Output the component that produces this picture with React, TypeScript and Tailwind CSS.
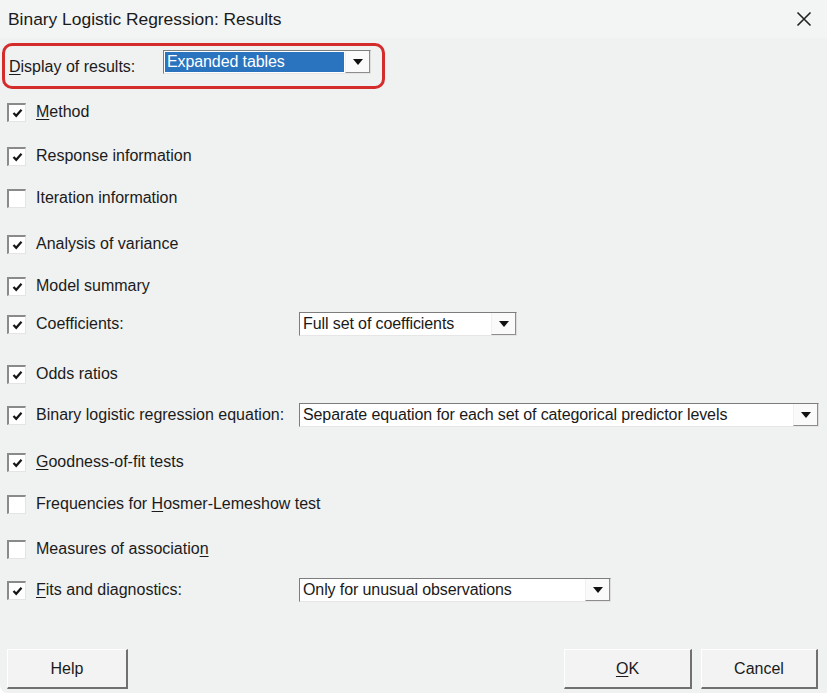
import React from 'react';

interface OptionRow {
  label: React.ReactNode;
  checked: boolean;
  mt: string;
  select?: { value: string; width: string };
}

function U({ children }: { children: React.ReactNode }) {
  return <span className="underline underline-offset-2">{children}</span>;
}

// Row list; margins keep the uneven spacing of the original dialog
const ROWS: OptionRow[] = [
  { label: <><U>M</U>ethod</>, checked: true, mt: 'mt-[11px]' },
  { label: 'Response information', checked: true, mt: 'mt-[20px]' },
  { label: 'Iteration information', checked: false, mt: 'mt-[18px]' },
  { label: 'Analysis of variance', checked: true, mt: 'mt-[22px]' },
  { label: 'Model summary', checked: true, mt: 'mt-[18px]' },
  { label: 'Coefficients:', checked: true, mt: 'mt-[14px]', select: { value: 'Full set of coefficients', width: 'w-[218px]' } },
  { label: 'Odds ratios', checked: true, mt: 'mt-[26px]' },
  { label: 'Binary logistic regression equation:', checked: true, mt: 'mt-[17px]', select: { value: 'Separate equation for each set of categorical predictor levels', width: 'w-[520px]' } },
  { label: <><U>G</U>oodness-of-fit tests</>, checked: true, mt: 'mt-[23px]' },
  { label: <>Frequencies for <U>H</U>osmer-Lemeshow test</>, checked: false, mt: 'mt-[18px]' },
  { label: <>Measures of associatio<U>n</U></>, checked: false, mt: 'mt-[21px]' },
  { label: <><U>F</U>its and diagnostics:</>, checked: true, mt: 'mt-[17px]', select: { value: 'Only for unusual observations', width: 'w-[312px]' } },
];

function Arrow() {
  return (
    <svg width="10" height="6" viewBox="0 0 10 6">
      <path d="M0 0 H10 L5 6 Z" fill="#111" />
    </svg>
  );
}

function Select({ value, width, highlight = false }: { value: string; width: string; highlight?: boolean }) {
  return (
    <div className={`${width} h-[24px] flex bg-white border-t border-l border-[#7d7d7d] border-r border-b border-r-[#dcdcdc] border-b-[#e6e6e6]`}>
      <div className="flex-1 flex items-center px-[1px] min-w-0">
        <span className={`px-[2px] leading-[20px] truncate tracking-[-0.1px] ${highlight ? 'bg-[#2a73bf] text-white w-full' : 'text-[#1a1a1a]'}`}>
          {value}
        </span>
      </div>
      <div className="w-[25px] flex items-center justify-center bg-[#fafafa] border-l border-[#f0f0f0] border-r border-b border-r-[#8d8d8d] border-b-[#8d8d8d]">
        <Arrow />
      </div>
    </div>
  );
}

function Checkbox({ checked }: { checked: boolean }) {
  return (
    <div className="w-[19px] h-[19px] bg-white border-t-2 border-l-2 border-[#8a8a8a] border-r border-b border-r-[#e4e4e4] border-b-[#e4e4e4] flex items-center justify-center">
      {checked && (
        <svg width="11" height="10" viewBox="0 0 11 10">
          <path d="M1.5 5 L4.2 7.8 L9.5 1.8" fill="none" stroke="#151515" strokeWidth="2.2" />
        </svg>
      )}
    </div>
  );
}

function Button({ children, width }: { children: React.ReactNode; width: string }) {
  return (
    <button className={`${width} h-[40px] bg-[#f3f3f3] border-t border-l border-[#ffffff] border-r-2 border-b-2 border-r-[#707070] border-b-[#707070] text-[16px] text-[#1a1a1a]`}>
      {children}
    </button>
  );
}

export default function App() {
  return (
    <div
      className="w-[827px] h-[693px] bg-[#f0f1f1] flex flex-col text-[16px] text-[#1b1b1b] rounded-bl-[8px] overflow-hidden"
      style={{ fontFamily: '"Liberation Sans", Arial, sans-serif' }}
    >
      {/* Title bar */}
      <div className="h-[38px] flex items-center justify-between pl-[8px] pr-[15px] bg-[#f3f4f4]">
        <span className="text-[17.4px] text-[#1a1a1a]">Binary Logistic Regression: Results</span>
        <svg width="16" height="16" viewBox="0 0 16 16">
          <path d="M1.5 1.5 L14.5 14.5 M14.5 1.5 L1.5 14.5" stroke="#222" strokeWidth="1.6" />
        </svg>
      </div>

      {/* Display of results */}
      <div className="mt-[5px] ml-[2px] w-[383px] h-[46px] border-[3px] border-[#d42b2b] rounded-[10px] flex items-center">
        <span className="ml-[4px] w-[154px] mt-[1px]"><U>D</U>isplay of results:</span>
        <div className="-mt-[8px]">
          <Select value="Expanded tables" width="w-[208px]" highlight />
        </div>
      </div>

      {/* Options */}
      <div className="flex flex-col">
        {ROWS.map((row, i) => (
          <div key={i} className={`${row.mt} h-[24px] flex items-center`}>
            <div className="ml-[7px] w-[29px]">
              <Checkbox checked={row.checked} />
            </div>
            <span className="w-[263px] whitespace-nowrap">{row.label}</span>
            {row.select && <Select value={row.select.value} width={row.select.width} />}
          </div>
        ))}
      </div>

      {/* Buttons */}
      <div className="mt-[47px] flex items-center px-[7px]">
        <Button width="w-[121px]">Help</Button>
        <div className="flex-1" />
        <Button width="w-[128px]"><U>O</U>K</Button>
        <div className="w-[9px]" />
        <Button width="w-[117px]">Cancel</Button>
        <div className="w-[2px]" />
      </div>
    </div>
  );
}
